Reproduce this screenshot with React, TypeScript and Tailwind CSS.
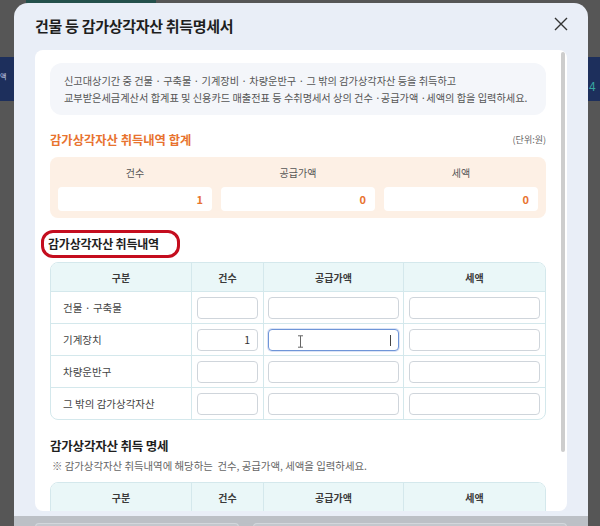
import React from 'react';

const FONT = "font-['Noto_Sans_CJK_KR','Noto_Sans',sans-serif]";

const rows = ['건물 · 구축물', '기계장치', '차량운반구', '그 밖의 감가상각자산'];

const Cell: React.FC<{ value?: string; focused?: boolean; className?: string }> = ({ value, focused, className }) => (
  <div
    className={`relative h-[22px] rounded-[4px] bg-white flex items-center justify-end pr-[7px] text-[10.5px] text-[#333] ${
      focused ? 'border-[1.5px] border-[#6f95d8] shadow-[0_0_0_1px_rgba(111,149,216,0.25)]' : 'border border-[#cfd5db]'
    } ${className ?? ''}`}
  >
    {value}
    {focused && (
      <>
        <svg className="absolute left-[28px] top-[5px]" width="7" height="13" viewBox="0 0 7 13">
          <path d="M1 0.8h5M1 12.2h5M3.5 0.8v11.4" stroke="#666" strokeWidth="1" fill="none" />
        </svg>
        <span className="absolute right-[7px] top-[5px] w-px h-[11px] bg-[#444]" />
      </>
    )}
  </div>
);

const TableHead: React.FC = () => (
  <div className="grid grid-cols-[141px_72px_140px_1fr] h-[28px] bg-[#eaf7f8] text-[10px] font-bold text-[#3a3a3a]">
    <div className="flex items-center justify-center border-r border-[#d4e8ec]">구분</div>
    <div className="flex items-center justify-center border-r border-[#d4e8ec]">건수</div>
    <div className="flex items-center justify-center border-r border-[#d4e8ec]">공급가액</div>
    <div className="flex items-center justify-center">세액</div>
  </div>
);

const App: React.FC = () => {
  return (
    <div className={`relative w-[600px] h-[526px] overflow-hidden bg-[#565656] ${FONT}`}>
      {/* page behind the overlay */}
      <div className="absolute left-0 top-[57px] w-[14px] h-[44px] bg-[#1d2f5c] text-[7px] text-[#c9d3ea] pt-[14px]">액</div>
      <div className="absolute right-0 top-[57px] w-[14px] h-[44px] bg-[#1d2f5c] text-[12px] text-[#37a6a0] pt-[20px] pl-[3px]">4</div>
      <div className="absolute left-[26px] top-0 w-[130px] h-[3px] bg-[#24504c]" />

      {/* modal */}
      <div className="absolute left-[14px] top-[3px] w-[574px] h-[530px] flex flex-col rounded-t-[14px] bg-[#e9eef7] overflow-hidden">
        <div className="h-[47px] shrink-0 flex items-center justify-between pl-[21px] pr-[20px]">
          <h1 className="text-[15px] font-bold text-[#1e1e1e] tracking-[-0.3px]">건물 등 감가상각자산 취득명세서</h1>
          <svg width="14" height="14" viewBox="0 0 14 14" className="-mt-[6px]">
            <path d="M1 1l12 12M13 1L1 13" stroke="#333" strokeWidth="1.4" fill="none" />
          </svg>
        </div>

        <div className="px-[21px] shrink-0">
          <div className="h-[461px] flex rounded-[8px] bg-white overflow-hidden">
            <div className="flex-1 min-w-0 pl-[15px] pr-[14px] pt-[13px]">
              {/* notice */}
              <div className="rounded-[12px] bg-[#f4f6fa] px-[14px] py-[9px] text-[10.2px] leading-[17px] text-[#555]">
                <p>신고대상기간 중 건물 · 구축물 · 기계장비 · 차량운반구 · 그 밖의 감가상각자산 등을 취득하고</p>
                <p>교부받은세금계산서 합계표 및 신용카드 매출전표 등 수취명세서 상의 건수 ·공급가액 ·세액의 합을 입력하세요.</p>
              </div>

              {/* total */}
              <div className="mt-[17px] flex items-center justify-between h-[16px]">
                <h2 className="text-[12.3px] font-bold text-[#e8732f]">감가상각자산 취득내역 합계</h2>
                <span className="text-[9px] text-[#666]">(단위:원)</span>
              </div>
              <div className="mt-[9px] rounded-[8px] bg-[#fdf0e5] px-[8px] pt-[8px] pb-[7px] grid grid-cols-3 gap-x-[9px]">
                {[
                  ['건수', '1'],
                  ['공급가액', '0'],
                  ['세액', '0'],
                ].map(([label, v]) => (
                  <div key={label} className="flex flex-col">
                    <div className="h-[14px] flex items-center justify-center text-[10px] text-[#555]">{label}</div>
                    <div className="mt-[8px] h-[24px] rounded-[4px] bg-white flex items-center justify-end pr-[9px] text-[11px] font-bold text-[#e8732f]">
                      {v}
                    </div>
                  </div>
                ))}
              </div>

              {/* acquisitions */}
              <div className="mt-[12px] -ml-[9px] inline-flex h-[28px] items-center rounded-[12px] border-[3px] border-[#c40d1e] pl-[4px] pr-[18px]">
                <h2 className="text-[12px] font-bold text-[#1e1e1e] tracking-[-0.2px]">감가상각자산 취득내역</h2>
              </div>
              <div className="mt-[4px] rounded-[8px] border border-[#d4e8ec] overflow-hidden">
                <TableHead />
                {rows.map((r, i) => (
                  <div key={r} className="grid grid-cols-[141px_72px_140px_1fr] h-[32px] border-t border-[#d4e8ec]">
                    <div className="flex items-center pl-[12px] text-[10.5px] text-[#444] border-r border-[#d4e8ec]">{r}</div>
                    <div className="flex items-center px-[5px] border-r border-[#d4e8ec]">
                      <Cell className="w-full" value={i === 1 ? '1' : ''} />
                    </div>
                    <div className="flex items-center px-[4px] border-r border-[#d4e8ec]">
                      <Cell className="w-full" focused={i === 1} />
                    </div>
                    <div className="flex items-center px-[5px]">
                      <Cell className="w-full" />
                    </div>
                  </div>
                ))}
              </div>

              {/* details */}
              <h2 className="mt-[17px] h-[18px] flex items-center text-[12.5px] font-bold text-[#1e1e1e] tracking-[-0.2px]">
                감가상각자산 취득 명세
              </h2>
              <p className="mt-[4px] pl-[2px] h-[14px] flex items-center text-[10.4px] text-[#666]">
                ※ 감가상각자산 취득내역에 해당하는&nbsp; 건수, 공급가액, 세액을 입력하세요.
              </p>
              <div className="mt-[9px] rounded-t-[8px] border border-[#d4e8ec] overflow-hidden">
                <TableHead />
                <div className="h-[32px] border-t border-[#d4e8ec]" />
              </div>
            </div>
            <div className="w-[7px] shrink-0 pt-[2px]">
              <div className="ml-[1px] w-[4px] h-[400px] rounded-full bg-[#cdcdcd]" />
            </div>
          </div>
        </div>

        {/* footer, dimmed */}
        <div className="mt-[5px] flex-1 bg-[#bcc0c6] px-[21px] pt-[7px] flex gap-[14px]">
          <div className="w-[204px] h-[20px] rounded-t-[4px] border-t border-x border-[#d3d7dc] bg-[#c3c7cd]" />
          <div className="flex-1 h-[20px] rounded-t-[4px] border-t border-x border-[#d3d7dc] bg-[#c3c7cd]" />
        </div>
      </div>
    </div>
  );
};

export default App;
